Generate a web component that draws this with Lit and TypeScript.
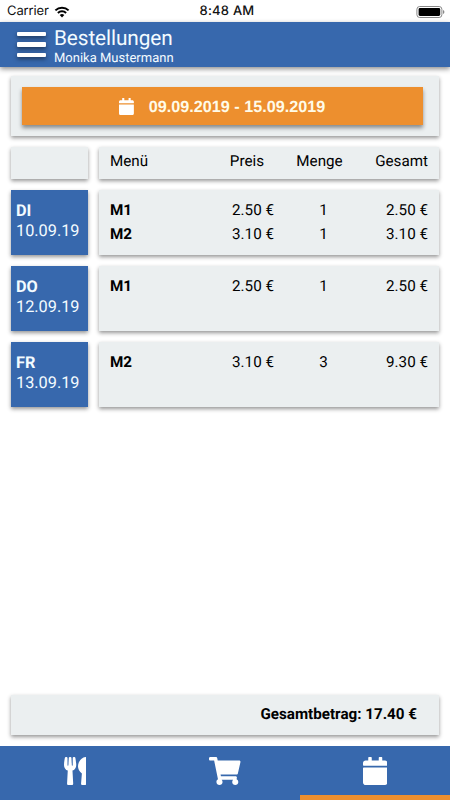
import { LitElement, html, css, svg } from "lit";
import { customElement, property } from "lit/decorators.js";

const ICONS: Record<string, { box: string; d: string }> = {
  utensils: {
    box: "0 0 416 512",
    d: "M207.9 15.2c.8 4.7 16.1 94.5 16.1 128.8 0 52.3-27.8 89.6-68.9 104.6L168 486.7c.7 13.7-10.2 25.3-24 25.3H80c-13.7 0-24.7-11.5-24-25.3l12.9-238.1C27.7 233.6 0 196.2 0 144 0 109.6 15.3 19.9 16.1 15.2 19.3-5.1 61.4-5.4 64 16.3v141.2c1.3 3.4 15.1 3.2 16 0 1.4-25.3 7.9-139.2 8-141.8 3.3-20.8 44.7-20.8 47.9 0 .2 2.7 6.6 116.5 8 141.8.9 3.2 14.8 3.4 16 0V16.3c2.6-21.6 44.8-21.4 47.9-1.1zm119.2 285.7l-15 185.1c-1.2 14 9.9 26 23.9 26h56c13.3 0 24-10.7 24-24V24c0-13.2-10.7-24-24-24-82.5 0-221.4 178.5-64.9 300.9z",
  },
  cart: {
    box: "0 0 576 512",
    d: "M528.12 301.319l47.273-208C578.806 78.301 567.391 64 551.99 64H159.208l-9.166-44.81C147.758 8.021 137.93 0 126.529 0H24C10.745 0 0 10.745 0 24v16c0 13.255 10.745 24 24 24h69.883l70.248 343.435C147.325 417.1 136 435.222 136 456c0 30.928 25.072 56 56 56s56-25.072 56-56c0-15.674-6.447-29.835-16.824-40h209.647C430.447 426.165 424 440.326 424 456c0 30.928 25.072 56 56 56s56-25.072 56-56c0-22.172-12.888-41.332-31.579-50.405l5.517-24.276c3.413-15.018-8.002-29.319-23.403-29.319H218.117l-6.545-32h293.145c11.206 0 20.92-7.754 23.403-18.681z",
  },
  calendar: {
    box: "0 0 448 512",
    d: "M12 192h424c6.6 0 12 5.4 12 12v260c0 26.5-21.5 48-48 48H48c-26.5 0-48-21.5-48-48V204c0-6.6 5.4-12 12-12zm436-44v-36c0-26.5-21.5-48-48-48h-48V12c0-6.6-5.4-12-12-12h-40c-6.6 0-12 5.4-12 12v52H160V12c0-6.6-5.4-12-12-12h-40c-6.6 0-12 5.4-12 12v52H48C21.5 64 0 85.5 0 112v36c0 6.6 5.4 12 12 12h424c6.6 0 12-5.4 12-12z",
  },
};

interface Item { menu: string; price: string; count: number; total: string }
interface Day { day: string; date: string; items: Item[] }

const DAYS: Day[] = [
  {
    day: "DI",
    date: "10.09.19",
    items: [
      { menu: "M1", price: "2.50 €", count: 1, total: "2.50 €" },
      { menu: "M2", price: "3.10 €", count: 1, total: "3.10 €" },
    ],
  },
  { day: "DO", date: "12.09.19", items: [{ menu: "M1", price: "2.50 €", count: 1, total: "2.50 €" }] },
  { day: "FR", date: "13.09.19", items: [{ menu: "M2", price: "3.10 €", count: 3, total: "9.30 €" }] },
];

@customElement("glyph-icon")
export class GlyphIcon extends LitElement {
  static styles = css`
    :host { display: block; }
    .glyph { display: block; height: 100%; fill: #fff; }
  `;
  @property() name = "calendar";
  render() {
    const icon = ICONS[this.name];
    return html`<svg class="glyph" viewBox=${icon.box}>${svg`<path d=${icon.d}></path>`}</svg>`;
  }
}

@customElement("status-bar")
export class StatusBar extends LitElement {
  static styles = css`
    :host {
      display: grid; grid-template-columns: 1fr auto 1fr; align-items: center;
      height: 22px; box-sizing: border-box; padding: 1px 5px 0 7px;
      font: 13px/21px Inter, sans-serif; color: #111;
    }
    .carrier { display: flex; align-items: center; gap: 5px; letter-spacing: -0.12px; }
    .time { font-weight: 500; letter-spacing: 0.2px; padding-left: 2px; }
    .battery { justify-self: end; display: block; }
    .wifi { display: block; }
  `;
  render() {
    return html`
      <div class="carrier">
        <span>Carrier</span>
        <svg class="wifi" width="16" height="12" viewBox="0 0 16 12">
          <path d="M1.4 4.4a9.4 9.4 0 0 1 13.2 0M3.9 7a5.9 5.9 0 0 1 8.2 0" fill="none" stroke="#000" stroke-width="2"></path>
          <path d="M8 11.4 5.7 9a3.3 3.3 0 0 1 4.6 0z"></path>
        </svg>
      </div>
      <span class="time">8:48 AM</span>
      <svg class="battery" width="29" height="12" viewBox="0 0 29 12">
        <rect x="0.9" y="0.5" width="25" height="11" rx="2.8" fill="#fff" stroke="#888"></rect>
        <rect x="2.6" y="2" width="21.6" height="8" rx="1.4"></rect>
        <path d="M27 4v4c1.9-.6 1.9-3.4 0-4z" fill="#888"></path>
      </svg>
    `;
  }
}

@customElement("app-root")
export class AppRoot extends LitElement {
  static styles = css`
    :host {
      display: flex; flex-direction: column; width: 450px; height: 800px;
      background: #fff; color: #000; overflow: hidden;
      font: 15.2px/24px Roboto, sans-serif; text-rendering: geometricPrecision;
    }
    .header {
      display: flex; gap: 8px; height: 45px; box-sizing: border-box; padding-left: 17px;
      background: #3768ad; color: #f3fbff; box-shadow: 0 2px 5px rgba(0, 0, 0, 0.45);
    }
    .burger {
      display: flex; flex-direction: column; gap: 6px; width: 29px; padding-top: 10px;
      filter: drop-shadow(0 2px 2px rgba(0, 0, 0, 0.5));
    }
    .line { height: 4.4px; border-radius: 1px; background: #fff; }
    .title { font-size: 20.8px; line-height: 25px; padding-top: 5px; letter-spacing: -0.1px; }
    .user { font-size: 13px; line-height: 14px; }
    .content { flex: 1; display: flex; flex-direction: column; gap: 11px; padding: 9px 11px 11px; }
    .card { background: #ebeff0; box-shadow: 0 2px 4px rgba(0, 0, 0, 0.42); box-sizing: border-box; }
    .period { height: 60px; padding: 11px 16px 11px 11px; }
    .range {
      display: flex; align-items: center; justify-content: center; gap: 15px; height: 38px;
      box-sizing: border-box; padding-right: 1px;
      background: #ed8f2e; color: #fffbe8; box-shadow: 0 3px 4px rgba(0, 0, 0, 0.42);
      font: bold 16.2px "Liberation Sans", sans-serif;
    }
    .range-icon { height: 17px; width: 15px; }
    .range-text { padding-top: 2px; }
    .row { display: grid; grid-template-columns: 77px 340px; gap: 11px; }
    .head { height: 32px; padding-top: 2px; }
    .table { padding-left: 11px; padding-right: 11px; }
    .body { height: 65px; padding-top: 8px; }
    .line-item { display: grid; grid-template-columns: 80px 84px 99px 1fr; }
    .columns .price { padding-right: 10px; }
    .menu { font-weight: 700; }
    .columns .menu { font-weight: 400; }
    .columns .count { padding-right: 8px; }
    .price, .total { text-align: right; }
    .count { text-align: center; }
    .day {
      height: 65px; box-sizing: border-box; padding: 11px 0 0 5px; background: #3768ad;
      color: #f3fbff; box-shadow: 0 2px 4px rgba(0, 0, 0, 0.42);
      font-size: 16.3px; line-height: 19.5px;
    }
    .name { font-weight: 700; }
    .sum {
      margin-top: auto; height: 40px; padding-right: 22px; text-align: right;
      font-weight: 700; line-height: 39px;
    }
    .tabs { display: grid; grid-template-columns: repeat(3, 1fr); height: 54px; background: #3768ad; }
    .tab {
      display: flex; justify-content: center; box-sizing: border-box; padding-top: 10.5px;
      border-bottom: 5px solid transparent;
    }
    .selected { border-bottom-color: #ed8f2e; }
    .tab-icon { height: 28px; }
  `;

  private line(item: Item) {
    return html`
      <div class="line-item">
        <span class="menu">${item.menu}</span>
        <span class="price">${item.price}</span>
        <span class="count">${item.count}</span>
        <span class="total">${item.total}</span>
      </div>
    `;
  }

  render() {
    return html`
      <status-bar></status-bar>
      <header class="header">
        <div class="burger">
          <div class="line"></div>
          <div class="line"></div>
          <div class="line"></div>
        </div>
        <div>
          <div class="title">Bestellungen</div>
          <div class="user">Monika Mustermann</div>
        </div>
      </header>
      <main class="content">
        <div class="card period">
          <div class="range">
            <glyph-icon class="range-icon" name="calendar"></glyph-icon>
            <span class="range-text">09.09.2019 - 15.09.2019</span>
          </div>
        </div>
        <div class="row">
          <div class="card head"></div>
          <div class="card head table">
            <div class="line-item columns">
              <span class="menu">Menü</span>
              <span class="price">Preis</span>
              <span class="count">Menge</span>
              <span class="total">Gesamt</span>
            </div>
          </div>
        </div>
        ${DAYS.map(
          (d) => html`
            <div class="row">
              <div class="day">
                <div class="name">${d.day}</div>
                <div>${d.date}</div>
              </div>
              <div class="card body table">${d.items.map((i) => this.line(i))}</div>
            </div>
          `
        )}
        <div class="card sum">Gesamtbetrag: 17.40 €</div>
      </main>
      <nav class="tabs">
        <div class="tab"><glyph-icon class="tab-icon" name="utensils"></glyph-icon></div>
        <div class="tab"><glyph-icon class="tab-icon" name="cart"></glyph-icon></div>
        <div class="tab selected"><glyph-icon class="tab-icon" name="calendar"></glyph-icon></div>
      </nav>
    `;
  }
}
